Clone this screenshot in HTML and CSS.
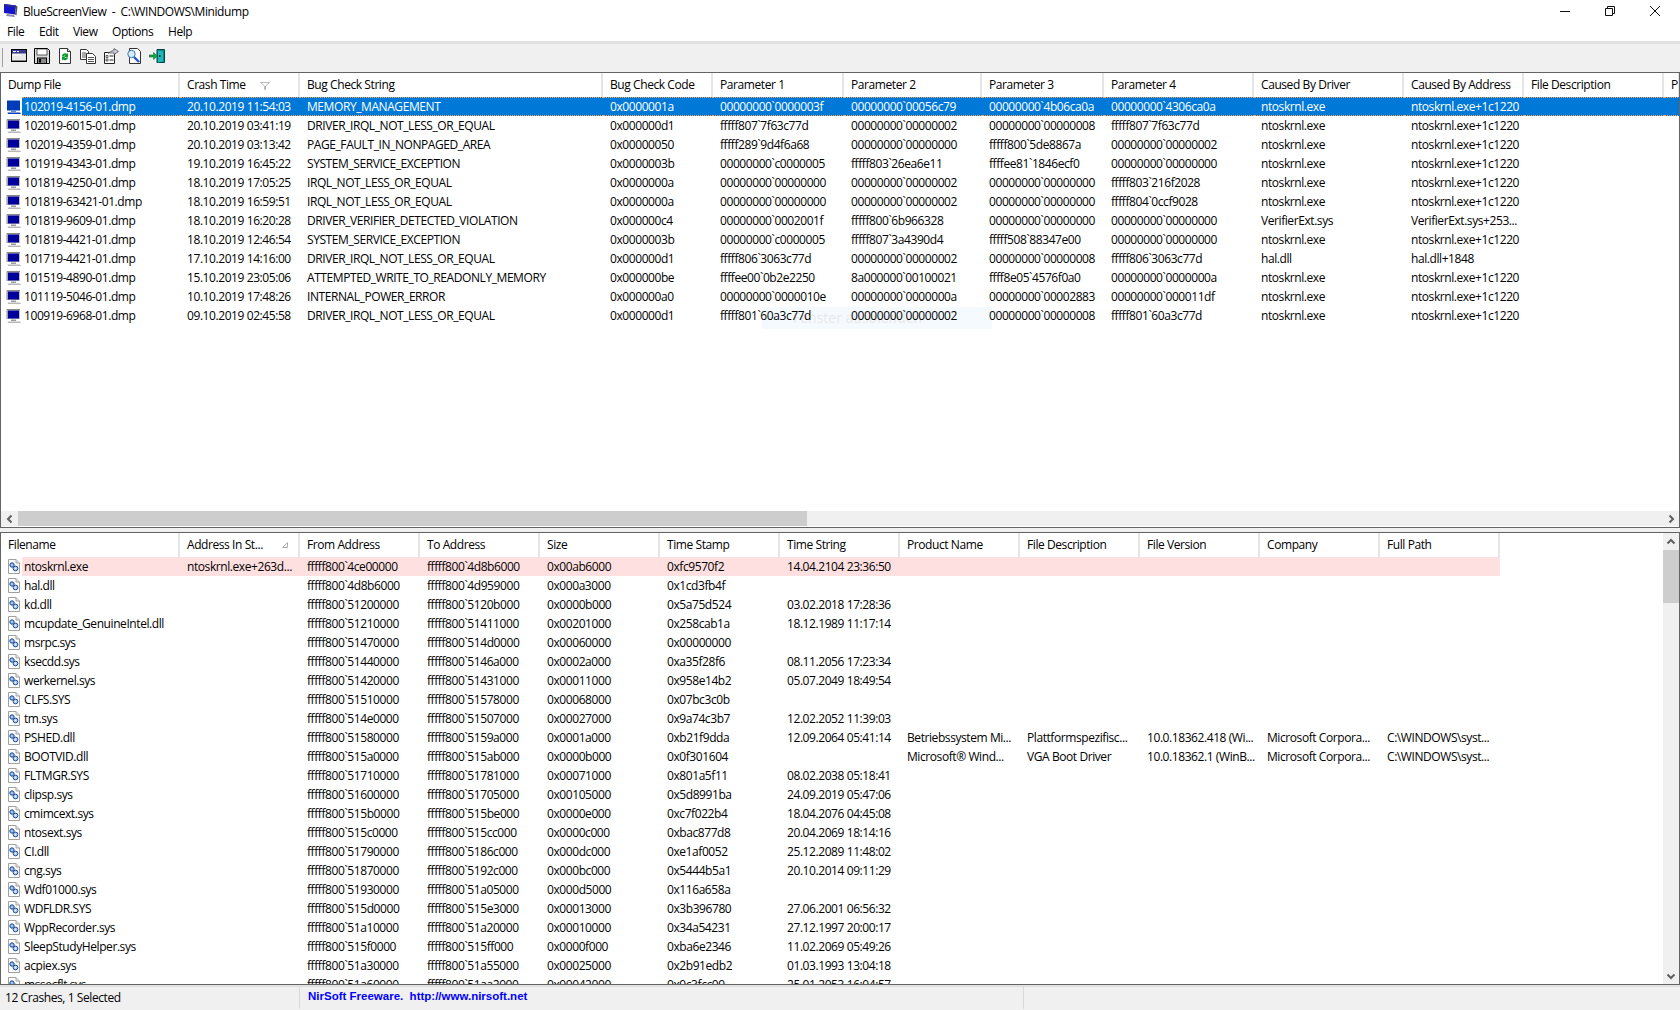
FILE: index.html
```html
<!DOCTYPE html>
<html lang="en">
<head>
<meta charset="utf-8">
<title>BlueScreenView</title>
<link rel="stylesheet" href="styles.css">
</head>
<body>
<svg class="defs" width="0" height="0" aria-hidden="true">
  <defs>
    <pattern id="dith" width="2" height="2" patternUnits="userSpaceOnUse"><rect width="2" height="2" fill="#0078d7"/><rect width="1" height="1" fill="#00009c"/><rect x="1" y="1" width="1" height="1" fill="#00009c"/></pattern>
    <symbol id="mon" viewBox="0 0 16 16">
      <path d="M1 2h13v9.5H1z" fill="#c0c0c0"/><path d="M1 2h13M1 2v9.5" stroke="#8a8a8a" fill="none"/>
      <rect x="2" y="3" width="11" height="8" fill="#00009c"/>
      <path d="M5 12h5v1.5H5z" fill="#9a9a9a"/><path d="M1.5 14h12.5l1 1.5H2z" fill="#b8b8b8"/>
    </symbol>
    <symbol id="monsel" viewBox="0 0 16 16">
      <rect x="1" y="2" width="13" height="10" fill="url(#dith)"/>
      <path d="M5 12h5v1.5H5z" fill="#5a8cc8"/><path d="M1.5 14h12.5l1 1.5H2z" fill="url(#dith)"/>
    </symbol>
    <symbol id="file" viewBox="0 0 14 17">
      <path d="M1.5 1.5h7.5l3.5 3.5v10.5h-11z" fill="#fff" stroke="#a0a0a0"/>
      <path d="M9 1.5v3.5h3.5" fill="#e8e8e8" stroke="#a0a0a0"/>
      <circle cx="5" cy="7" r="2.2" fill="#7fa8d8" stroke="#1f4f9c"/>
      <circle cx="8.5" cy="10.5" r="2.4" fill="#a9c6e8" stroke="#1f4f9c"/>
      <circle cx="5" cy="7" r=".7" fill="#fff"/><circle cx="8.5" cy="10.5" r=".8" fill="#fff"/>
    </symbol>
    <symbol id="chev" viewBox="0 0 10 10">
      <path d="M6.5 1.5L3 5l3.5 3.5" fill="none" stroke="#606060" stroke-width="2"/>
    </symbol>
  </defs>
</svg>

<header class="titlebar">
  <svg class="appicon" viewBox="0 0 16 16"><path d="M1 1l12 1.5-1 9-11-1.5z" fill="#1414c8"/><path d="M1 1l12 1.5-.3 2L1 3z" fill="#2a2a9a"/><path d="M4 11l7 1 1 2-9-1z" fill="#8c8ca8"/><path d="M13 2.500l1.500 1-1 9-1.500-1z" fill="#555"/></svg>
  <span class="titletext">BlueScreenView  -  C:\WINDOWS\Minidump</span>
  <div class="winbtns">
    <svg class="winbtn" viewBox="0 0 10 10"><path d="M0 5.500h10" stroke="#111" fill="none"/></svg>
    <svg class="winbtn" viewBox="0 0 10 10"><path d="M.5 2.500h7v7h-7zM2.500 2.500v-2h7v7h-2" stroke="#111" fill="none"/></svg>
    <svg class="winbtn" viewBox="0 0 10 10"><path d="M0 0l10 10M10 0L0 10" stroke="#111" fill="none"/></svg>
  </div>
</header>

<nav class="menubar">
  <span class="m-file">File</span><span class="m-edit">Edit</span><span class="m-view">View</span><span class="m-opt">Options</span><span>Help</span>
</nav>

<div class="toolbar">
  <span class="grip"></span>
  <svg class="tool" viewBox="0 0 16 16"><rect x=".5" y="1.500" width="15" height="12" fill="#e8e8e8" stroke="#000"/><rect x="1" y="2" width="14" height="3.500" fill="#3a3a8a"/><path d="M2 3.500h3M6 3.500h2M2 7h8" stroke="#fff"/><path d="M1 12.500h14" stroke="#888"/></svg>
  <svg class="tool" viewBox="0 0 16 16"><path d="M.5.500h13l2 2v13H.5z" fill="#d8d8d8" stroke="#000"/><rect x="3" y="1" width="10" height="6" fill="#fff" stroke="#000" stroke-width=".6"/><rect x="3.500" y="10" width="9" height="5.500" fill="#8a8a8a" stroke="#000"/><rect x="5" y="11" width="2" height="3.500" fill="#000"/></svg>
  <svg class="tool" viewBox="0 0 16 16"><path d="M2.500.500h8l3 3v12h-11z" fill="#fff" stroke="#333"/><path d="M10.500.500v3h3" fill="#ddd" stroke="#333"/><path d="M5 8a3 3 0 0 1 5-2l1-1v4H7l1.500-1.300A1.600 1.600 0 0 0 6.500 8.500z" fill="#0a9a2a"/><path d="M11 9.500a3 3 0 0 1-5 2l-1 1v-4h4l-1.500 1.300a1.600 1.600 0 0 0 2-.6z" fill="#0a9a2a"/></svg>
  <svg class="tool" viewBox="0 0 16 16"><path d="M.5 1.500h6l2 2v8h-8z" fill="#fff" stroke="#333"/><path d="M2 5h4M2 7h4M2 9h4" stroke="#555"/><path d="M6.500 5.500h6l3 3v7h-9z" fill="#fff" stroke="#333"/><path d="M8 9.500h6M8 11.500h6M8 13.500h6" stroke="#555"/></svg>
  <svg class="tool" viewBox="0 0 16 16"><path d="M1.500 4.500h10v11h-10z" fill="#fff" stroke="#222"/><path d="M3 7.500h2v2H3zM3 11h2v2H3z" fill="#fff" stroke="#222" stroke-width=".7"/><path d="M6.500 8h4M6.500 12h4" stroke="#222"/><path d="M5 5l6-3V.500l4.500 3-4.500 3V5z" fill="#c8c8d8" stroke="#444" stroke-width=".7"/></svg>
  <svg class="tool" viewBox="0 0 16 16"><path d="M3.500.500h8l3 3v12h-11z" fill="#fff" stroke="#333"/><circle cx="5.500" cy="6" r="3.700" fill="#d6ecfa" stroke="#3a78b8"/><path d="M8 9l5 5" stroke="#2a55c8" stroke-width="2.400"/></svg>
  <svg class="tool" viewBox="0 0 16 16"><path d="M8 1.500h7.500v13H8z" fill="#0a8a8a" stroke="#044"/><path d="M9 2.500l5 1v10l-5 1z" fill="#20b8b8"/><path d="M0 7h4.500V4.500L8.500 8l-4 3.500V9H0z" fill="#12a838" stroke="#063" stroke-width=".5"/><rect x="10" y="7" width="1.500" height="2" fill="#033"/></svg>
</div>

<section class="list upper">
  <div class="ghost">Fenster ausblenden</div>
  <div class="head head-up">
    <span class="hc">Dump File</span>
    <span class="hc">Crash Time<svg class="sort sort-up" viewBox="0 0 10 8"><path d="M.5.500h9L5.500 4v3.500h-1V4z" fill="none" stroke="#b8b8b8"/></svg></span>
    <span class="hc">Bug Check String</span><span class="hc">Bug Check Code</span><span class="hc">Parameter 1</span><span class="hc">Parameter 2</span><span class="hc">Parameter 3</span><span class="hc">Parameter 4</span><span class="hc">Caused By Driver</span><span class="hc">Caused By Address</span><span class="hc">File Description</span><span class="hc">Processor</span>
  </div>
  <div class="rows">
    <div class="row row-up selected"><svg class="ic"><use href="#monsel"/></svg><span class="c">102019-4156-01.dmp</span><span class="c">20.10.2019 11:54:03</span><span class="c">MEMORY_MANAGEMENT</span><span class="c">0x0000001a</span><span class="c">00000000`0000003f</span><span class="c">00000000`00056c79</span><span class="c">00000000`4b06ca0a</span><span class="c">00000000`4306ca0a</span><span class="c">ntoskrnl.exe</span><span class="c">ntoskrnl.exe+1c1220</span><span class="c"></span><span class="c"></span></div>
    <div class="row row-up"><svg class="ic"><use href="#mon"/></svg><span class="c">102019-6015-01.dmp</span><span class="c">20.10.2019 03:41:19</span><span class="c">DRIVER_IRQL_NOT_LESS_OR_EQUAL</span><span class="c">0x000000d1</span><span class="c">fffff807`7f63c77d</span><span class="c">00000000`00000002</span><span class="c">00000000`00000008</span><span class="c">fffff807`7f63c77d</span><span class="c">ntoskrnl.exe</span><span class="c">ntoskrnl.exe+1c1220</span></div>
    <div class="row row-up"><svg class="ic"><use href="#mon"/></svg><span class="c">102019-4359-01.dmp</span><span class="c">20.10.2019 03:13:42</span><span class="c">PAGE_FAULT_IN_NONPAGED_AREA</span><span class="c">0x00000050</span><span class="c">fffff289`9d4f6a68</span><span class="c">00000000`00000000</span><span class="c">fffff800`5de8867a</span><span class="c">00000000`00000002</span><span class="c">ntoskrnl.exe</span><span class="c">ntoskrnl.exe+1c1220</span></div>
    <div class="row row-up"><svg class="ic"><use href="#mon"/></svg><span class="c">101919-4343-01.dmp</span><span class="c">19.10.2019 16:45:22</span><span class="c">SYSTEM_SERVICE_EXCEPTION</span><span class="c">0x0000003b</span><span class="c">00000000`c0000005</span><span class="c">fffff803`26ea6e11</span><span class="c">ffffee81`1846ecf0</span><span class="c">00000000`00000000</span><span class="c">ntoskrnl.exe</span><span class="c">ntoskrnl.exe+1c1220</span></div>
    <div class="row row-up"><svg class="ic"><use href="#mon"/></svg><span class="c">101819-4250-01.dmp</span><span class="c">18.10.2019 17:05:25</span><span class="c">IRQL_NOT_LESS_OR_EQUAL</span><span class="c">0x0000000a</span><span class="c">00000000`00000000</span><span class="c">00000000`00000002</span><span class="c">00000000`00000000</span><span class="c">fffff803`216f2028</span><span class="c">ntoskrnl.exe</span><span class="c">ntoskrnl.exe+1c1220</span></div>
    <div class="row row-up"><svg class="ic"><use href="#mon"/></svg><span class="c">101819-63421-01.dmp</span><span class="c">18.10.2019 16:59:51</span><span class="c">IRQL_NOT_LESS_OR_EQUAL</span><span class="c">0x0000000a</span><span class="c">00000000`00000000</span><span class="c">00000000`00000002</span><span class="c">00000000`00000000</span><span class="c">fffff804`0ccf9028</span><span class="c">ntoskrnl.exe</span><span class="c">ntoskrnl.exe+1c1220</span></div>
    <div class="row row-up"><svg class="ic"><use href="#mon"/></svg><span class="c">101819-9609-01.dmp</span><span class="c">18.10.2019 16:20:28</span><span class="c">DRIVER_VERIFIER_DETECTED_VIOLATION</span><span class="c">0x000000c4</span><span class="c">00000000`0002001f</span><span class="c">fffff800`6b966328</span><span class="c">00000000`00000000</span><span class="c">00000000`00000000</span><span class="c">VerifierExt.sys</span><span class="c">VerifierExt.sys+253...</span></div>
    <div class="row row-up"><svg class="ic"><use href="#mon"/></svg><span class="c">101819-4421-01.dmp</span><span class="c">18.10.2019 12:46:54</span><span class="c">SYSTEM_SERVICE_EXCEPTION</span><span class="c">0x0000003b</span><span class="c">00000000`c0000005</span><span class="c">fffff807`3a4390d4</span><span class="c">fffff508`88347e00</span><span class="c">00000000`00000000</span><span class="c">ntoskrnl.exe</span><span class="c">ntoskrnl.exe+1c1220</span></div>
    <div class="row row-up"><svg class="ic"><use href="#mon"/></svg><span class="c">101719-4421-01.dmp</span><span class="c">17.10.2019 14:16:00</span><span class="c">DRIVER_IRQL_NOT_LESS_OR_EQUAL</span><span class="c">0x000000d1</span><span class="c">fffff806`3063c77d</span><span class="c">00000000`00000002</span><span class="c">00000000`00000008</span><span class="c">fffff806`3063c77d</span><span class="c">hal.dll</span><span class="c">hal.dll+1848</span></div>
    <div class="row row-up"><svg class="ic"><use href="#mon"/></svg><span class="c">101519-4890-01.dmp</span><span class="c">15.10.2019 23:05:06</span><span class="c">ATTEMPTED_WRITE_TO_READONLY_MEMORY</span><span class="c">0x000000be</span><span class="c">ffffee00`0b2e2250</span><span class="c">8a000000`00100021</span><span class="c">ffff8e05`4576f0a0</span><span class="c">00000000`0000000a</span><span class="c">ntoskrnl.exe</span><span class="c">ntoskrnl.exe+1c1220</span></div>
    <div class="row row-up"><svg class="ic"><use href="#mon"/></svg><span class="c">101119-5046-01.dmp</span><span class="c">10.10.2019 17:48:26</span><span class="c">INTERNAL_POWER_ERROR</span><span class="c">0x000000a0</span><span class="c">00000000`0000010e</span><span class="c">00000000`0000000a</span><span class="c">00000000`00002883</span><span class="c">00000000`000011df</span><span class="c">ntoskrnl.exe</span><span class="c">ntoskrnl.exe+1c1220</span></div>
    <div class="row row-up"><svg class="ic"><use href="#mon"/></svg><span class="c">100919-6968-01.dmp</span><span class="c">09.10.2019 02:45:58</span><span class="c">DRIVER_IRQL_NOT_LESS_OR_EQUAL</span><span class="c">0x000000d1</span><span class="c">fffff801`60a3c77d</span><span class="c">00000000`00000002</span><span class="c">00000000`00000008</span><span class="c">fffff801`60a3c77d</span><span class="c">ntoskrnl.exe</span><span class="c">ntoskrnl.exe+1c1220</span></div>
  </div>
  <div class="hscroll">
    <span class="sbtn"><svg class="chev"><use href="#chev"/></svg></span>
    <span class="hthumb"></span>
    <span class="htrack"></span>
    <span class="sbtn sbtn-r"><svg class="chev chev-r"><use href="#chev"/></svg></span>
  </div>
</section>

<div class="splitter"></div>

<section class="list lower">
  <div class="lower-main">
    <div class="head head-low">
      <span class="hc">Filename</span>
      <span class="hc">Address In St...<svg class="sort sort-low" viewBox="0 0 6 6"><path d="M.5 5.500h5V.500z" fill="none" stroke="#b0b0b0"/></svg></span>
      <span class="hc">From Address</span><span class="hc">To Address</span><span class="hc">Size</span><span class="hc">Time Stamp</span><span class="hc">Time String</span><span class="hc">Product Name</span><span class="hc">File Description</span><span class="hc">File Version</span><span class="hc">Company</span><span class="hc">Full Path</span>
    </div>
    <div class="rows">
      <div class="row row-low hot"><svg class="ic"><use href="#file"/></svg><span class="c">ntoskrnl.exe</span><span class="c">ntoskrnl.exe+263d...</span><span class="c">fffff800`4ce00000</span><span class="c">fffff800`4d8b6000</span><span class="c">0x00ab6000</span><span class="c">0xfc9570f2</span><span class="c">14.04.2104 23:36:50</span><span class="c"></span><span class="c"></span><span class="c"></span><span class="c"></span><span class="c"></span></div>
      <div class="row row-low"><svg class="ic"><use href="#file"/></svg><span class="c">hal.dll</span><span class="c"></span><span class="c">fffff800`4d8b6000</span><span class="c">fffff800`4d959000</span><span class="c">0x000a3000</span><span class="c">0x1cd3fb4f</span></div>
      <div class="row row-low"><svg class="ic"><use href="#file"/></svg><span class="c">kd.dll</span><span class="c"></span><span class="c">fffff800`51200000</span><span class="c">fffff800`5120b000</span><span class="c">0x0000b000</span><span class="c">0x5a75d524</span><span class="c">03.02.2018 17:28:36</span></div>
      <div class="row row-low"><svg class="ic"><use href="#file"/></svg><span class="c">mcupdate_GenuineIntel.dll</span><span class="c"></span><span class="c">fffff800`51210000</span><span class="c">fffff800`51411000</span><span class="c">0x00201000</span><span class="c">0x258cab1a</span><span class="c">18.12.1989 11:17:14</span></div>
      <div class="row row-low"><svg class="ic"><use href="#file"/></svg><span class="c">msrpc.sys</span><span class="c"></span><span class="c">fffff800`51470000</span><span class="c">fffff800`514d0000</span><span class="c">0x00060000</span><span class="c">0x00000000</span></div>
      <div class="row row-low"><svg class="ic"><use href="#file"/></svg><span class="c">ksecdd.sys</span><span class="c"></span><span class="c">fffff800`51440000</span><span class="c">fffff800`5146a000</span><span class="c">0x0002a000</span><span class="c">0xa35f28f6</span><span class="c">08.11.2056 17:23:34</span></div>
      <div class="row row-low"><svg class="ic"><use href="#file"/></svg><span class="c">werkernel.sys</span><span class="c"></span><span class="c">fffff800`51420000</span><span class="c">fffff800`51431000</span><span class="c">0x00011000</span><span class="c">0x958e14b2</span><span class="c">05.07.2049 18:49:54</span></div>
      <div class="row row-low"><svg class="ic"><use href="#file"/></svg><span class="c">CLFS.SYS</span><span class="c"></span><span class="c">fffff800`51510000</span><span class="c">fffff800`51578000</span><span class="c">0x00068000</span><span class="c">0x07bc3c0b</span></div>
      <div class="row row-low"><svg class="ic"><use href="#file"/></svg><span class="c">tm.sys</span><span class="c"></span><span class="c">fffff800`514e0000</span><span class="c">fffff800`51507000</span><span class="c">0x00027000</span><span class="c">0x9a74c3b7</span><span class="c">12.02.2052 11:39:03</span></div>
      <div class="row row-low"><svg class="ic"><use href="#file"/></svg><span class="c">PSHED.dll</span><span class="c"></span><span class="c">fffff800`51580000</span><span class="c">fffff800`5159a000</span><span class="c">0x0001a000</span><span class="c">0xb21f9dda</span><span class="c">12.09.2064 05:41:14</span><span class="c">Betriebssystem Mi...</span><span class="c">Plattformspezifisc...</span><span class="c">10.0.18362.418 (Wi...</span><span class="c">Microsoft Corpora...</span><span class="c">C:\WINDOWS\syst...</span></div>
      <div class="row row-low"><svg class="ic"><use href="#file"/></svg><span class="c">BOOTVID.dll</span><span class="c"></span><span class="c">fffff800`515a0000</span><span class="c">fffff800`515ab000</span><span class="c">0x0000b000</span><span class="c">0x0f301604</span><span class="c"></span><span class="c">Microsoft® Wind...</span><span class="c">VGA Boot Driver</span><span class="c">10.0.18362.1 (WinB...</span><span class="c">Microsoft Corpora...</span><span class="c">C:\WINDOWS\syst...</span></div>
      <div class="row row-low"><svg class="ic"><use href="#file"/></svg><span class="c">FLTMGR.SYS</span><span class="c"></span><span class="c">fffff800`51710000</span><span class="c">fffff800`51781000</span><span class="c">0x00071000</span><span class="c">0x801a5f11</span><span class="c">08.02.2038 05:18:41</span></div>
      <div class="row row-low"><svg class="ic"><use href="#file"/></svg><span class="c">clipsp.sys</span><span class="c"></span><span class="c">fffff800`51600000</span><span class="c">fffff800`51705000</span><span class="c">0x00105000</span><span class="c">0x5d8991ba</span><span class="c">24.09.2019 05:47:06</span></div>
      <div class="row row-low"><svg class="ic"><use href="#file"/></svg><span class="c">cmimcext.sys</span><span class="c"></span><span class="c">fffff800`515b0000</span><span class="c">fffff800`515be000</span><span class="c">0x0000e000</span><span class="c">0xc7f022b4</span><span class="c">18.04.2076 04:45:08</span></div>
      <div class="row row-low"><svg class="ic"><use href="#file"/></svg><span class="c">ntosext.sys</span><span class="c"></span><span class="c">fffff800`515c0000</span><span class="c">fffff800`515cc000</span><span class="c">0x0000c000</span><span class="c">0xbac877d8</span><span class="c">20.04.2069 18:14:16</span></div>
      <div class="row row-low"><svg class="ic"><use href="#file"/></svg><span class="c">CI.dll</span><span class="c"></span><span class="c">fffff800`51790000</span><span class="c">fffff800`5186c000</span><span class="c">0x000dc000</span><span class="c">0xe1af0052</span><span class="c">25.12.2089 11:48:02</span></div>
      <div class="row row-low"><svg class="ic"><use href="#file"/></svg><span class="c">cng.sys</span><span class="c"></span><span class="c">fffff800`51870000</span><span class="c">fffff800`5192c000</span><span class="c">0x000bc000</span><span class="c">0x5444b5a1</span><span class="c">20.10.2014 09:11:29</span></div>
      <div class="row row-low"><svg class="ic"><use href="#file"/></svg><span class="c">Wdf01000.sys</span><span class="c"></span><span class="c">fffff800`51930000</span><span class="c">fffff800`51a05000</span><span class="c">0x000d5000</span><span class="c">0x116a658a</span></div>
      <div class="row row-low"><svg class="ic"><use href="#file"/></svg><span class="c">WDFLDR.SYS</span><span class="c"></span><span class="c">fffff800`515d0000</span><span class="c">fffff800`515e3000</span><span class="c">0x00013000</span><span class="c">0x3b396780</span><span class="c">27.06.2001 06:56:32</span></div>
      <div class="row row-low"><svg class="ic"><use href="#file"/></svg><span class="c">WppRecorder.sys</span><span class="c"></span><span class="c">fffff800`51a10000</span><span class="c">fffff800`51a20000</span><span class="c">0x00010000</span><span class="c">0x34a54231</span><span class="c">27.12.1997 20:00:17</span></div>
      <div class="row row-low"><svg class="ic"><use href="#file"/></svg><span class="c">SleepStudyHelper.sys</span><span class="c"></span><span class="c">fffff800`515f0000</span><span class="c">fffff800`515ff000</span><span class="c">0x0000f000</span><span class="c">0xba6e2346</span><span class="c">11.02.2069 05:49:26</span></div>
      <div class="row row-low"><svg class="ic"><use href="#file"/></svg><span class="c">acpiex.sys</span><span class="c"></span><span class="c">fffff800`51a30000</span><span class="c">fffff800`51a55000</span><span class="c">0x00025000</span><span class="c">0x2b91edb2</span><span class="c">01.03.1993 13:04:18</span></div>
      <div class="row row-low"><svg class="ic"><use href="#file"/></svg><span class="c">mssecflt.sys</span><span class="c"></span><span class="c">fffff800`51a60000</span><span class="c">fffff800`51aa2000</span><span class="c">0x00042000</span><span class="c">0x9c3fcc09</span><span class="c">25.01.2053 16:04:57</span></div>
    </div>
  </div>
  <div class="vscroll">
    <span class="vbtn"><svg class="chev chev-u"><use href="#chev"/></svg></span>
    <span class="vthumb"></span>
    <span class="vtrack"></span>
    <span class="vbtn"><svg class="chev chev-d"><use href="#chev"/></svg></span>
  </div>
</section>

<footer class="statusbar">
  <span class="st st-1">12 Crashes, 1 Selected</span>
  <span class="st st-2">NirSoft Freeware.  http://www.nirsoft.net</span>
  <span class="st st-3"></span>
</footer>
</body>
</html>
```

FILE: styles.css
```css
* { box-sizing: border-box; }
html, body { margin: 0; padding: 0; }
body {
  width: 1680px;
  height: 1010px;
  overflow: hidden;
  display: flex;
  flex-direction: column;
  background: #f0f0f0;
  color: #000;
  font: 12px/19px "Open Sans", "Liberation Sans", sans-serif;
  letter-spacing: -0.42px;
}
.defs { position: absolute; }

.titlebar {
  height: 22px;
  background: #fff;
  display: flex;
  align-items: center;
  padding-left: 3px;
}
.appicon { width: 16px; height: 16px; margin-right: 4px; }
.titletext { white-space: pre; flex: 1; }
.winbtns { display: flex; padding-right: 20px; gap: 35px; }
.winbtn { width: 10px; height: 10px; display: block; }

.menubar {
  height: 19px;
  background: #fff;
  display: flex;
  padding-left: 7px;
}
.menubar span { display: block; }
.m-file { width: 32px; }
.m-edit { width: 34px; }
.m-view { width: 39px; }
.m-opt { width: 56px; }

.toolbar {
  height: 31px;
  border-top: 3px solid #e0e0e0;
  background: #f0f0f0;
  display: flex;
  align-items: flex-start;
  padding: 4px 0 0 2px;
  gap: 7px;
}
.grip { width: 1px; height: 19px; background: #a0a0a0; margin-right: 1px; }
.tool { width: 16px; height: 16px; display: block; }

.list {
  border: 1px solid #646464;
  background: #fff;
  overflow: hidden;
  position: relative;
}
.upper {
  height: 456px;
  display: flex;
  flex-direction: column;
  flex: none;
}
.splitter { height: 4px; flex: none; background: #f0f0f0; }
.lower {
  height: 453px;
  flex: none;
  display: flex;
}
.lower-main { flex: 1; min-width: 0; overflow: hidden; }

.head { display: grid; height: 24px; line-height: 24px; }
.head-up { grid-template-columns: 179px 120px 303px 110px 131px 138px 122px 150px 150px 120px 140px 16px; }
.head-low { grid-template-columns: 179px repeat(11, 120px); }
.hc {
  display: block;
  padding-left: 7px;
  border-right: 2px solid #e5e5e5;
  white-space: nowrap;
  overflow: hidden;
  position: relative;
}
.sort { position: absolute; }
.sort-up { width: 10px; height: 8px; left: 80px; top: 9px; }
.sort-low { width: 6px; height: 6px; left: 102px; top: 9px; }

.rows { flex: 1; min-height: 0; position: relative; }
.row { display: grid; height: 19px; }
.row-up { grid-template-columns: 21px 158px 120px 303px 110px 131px 138px 122px 150px 150px 120px 140px 16px; }
.row-low { grid-template-columns: 21px 158px repeat(11, 120px); }
.ic { width: 16px; height: 17px; margin: 1px 0 0 5px; display: block; }
.row-low .ic { width: 14px; height: 17px; margin-left: 6px; }
.c {
  display: block;
  padding-left: 7px;
  white-space: nowrap;
  overflow: hidden;
}
.row .c:nth-child(2) { padding-left: 2px; }
.selected .c {
  background: #0078d7;
  color: #fff;
  border-top: 1px dotted #f2a65a;
  border-bottom: 1px dotted #f2a65a;
  line-height: 17px;
}
.hot .c { background: #ffe0e0; }

.ghost {
  position: absolute;
  left: 761px;
  top: 234px;
  width: 230px;
  height: 22px;
  padding-left: 31px;
  background: #f5faff;
  color: #e8e8e8;
  font-size: 14px;
  line-height: 22px;
  letter-spacing: 0;
}

.hscroll { height: 15px; margin-bottom: 1px; display: flex; background: #f0f0f0; flex: none; }
.sbtn { width: 17px; display: flex; align-items: center; justify-content: center; flex: none; }
.hthumb { width: 789px; background: #cdcdcd; flex: none; }
.htrack { flex: 1; }
.chev { width: 10px; height: 10px; display: block; }
.chev-r { transform: rotate(180deg); }
.chev-u { transform: rotate(90deg); }
.chev-d { transform: rotate(-90deg); }

.vscroll { width: 16px; flex: none; background: #f0f0f0; display: flex; flex-direction: column; }
.vbtn { height: 17px; display: flex; align-items: center; justify-content: center; flex: none; }
.vthumb { height: 53px; background: #cdcdcd; flex: none; }
.vtrack { flex: 1; }

.statusbar {
  flex: none;
  height: 24px;
  border-top: 2px solid #e0e0e0;
  display: flex;
  background: #f0f0f0;
}
.st { display: block; white-space: pre; line-height: 22px; }
.st-1 { width: 300px; padding-left: 5px; border-right: 1px solid #d9d9d9; }
.st-2 {
  width: 724px;
  padding-left: 8px;
  border-right: 1px solid #d9d9d9;
  color: #0000ff;
  font: bold 11.500px/18px "Liberation Sans", sans-serif;
  letter-spacing: 0;
}
.st-3 { flex: 1; }
```
